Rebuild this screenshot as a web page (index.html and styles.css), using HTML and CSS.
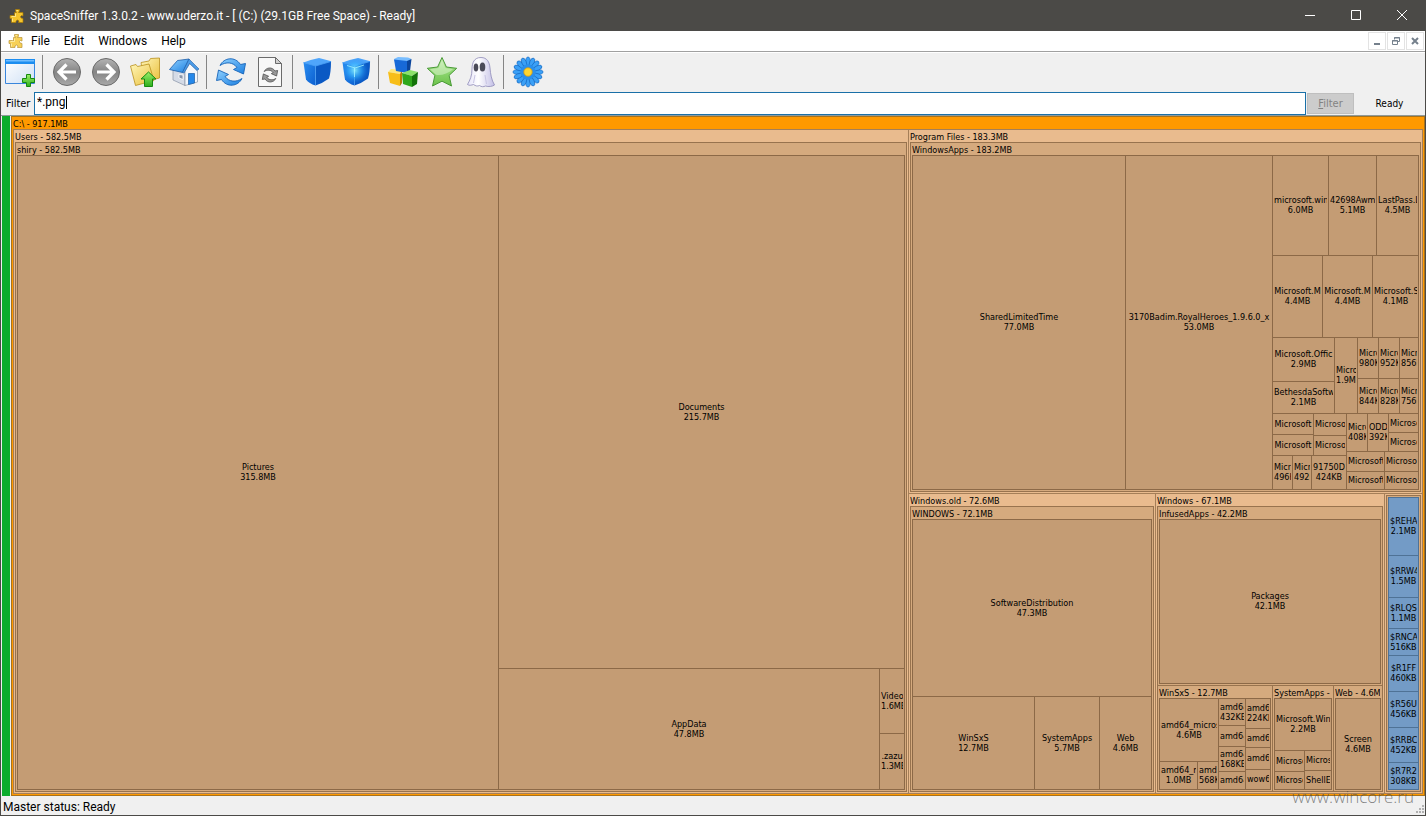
FILE: index.html
```
<!DOCTYPE html>
<html lang="en">
<head>
    <meta charset="UTF-8">
    <meta name="viewport" content="width=device-width, initial-scale=1.0">
    <title>SpaceSniffer 1.3.0.2</title>
    <link rel="stylesheet" href="styles.css">
</head>
<body>
    <svg class="defs" aria-hidden="true">
        <defs>
            <linearGradient id="ball" x1="0" y1="0" x2="0" y2="1">
                <stop offset="0" stop-color="#b4b4b4"/>
                <stop offset="0.5" stop-color="#858585"/>
                <stop offset="1" stop-color="#a9a9a9"/>
            </linearGradient>
            <linearGradient id="blue" x1="0" y1="0" x2="1" y2="1">
                <stop offset="0" stop-color="#8fd0ff"/>
                <stop offset="1" stop-color="#1b7fe0"/>
            </linearGradient>
            <linearGradient id="folder" x1="0" y1="0" x2="1" y2="1">
                <stop offset="0" stop-color="#fff6b8"/>
                <stop offset="1" stop-color="#e9bf3c"/>
            </linearGradient>
            <linearGradient id="green" x1="0" y1="0" x2="0" y2="1">
                <stop offset="0" stop-color="#9af06a"/>
                <stop offset="1" stop-color="#2fae1c"/>
            </linearGradient>
            <linearGradient id="star" x1="0" y1="0" x2="0" y2="1">
                <stop offset="0" stop-color="#c4ecae"/>
                <stop offset="0.5" stop-color="#8dd670"/>
                <stop offset="1" stop-color="#6cc24a"/>
            </linearGradient>
            <linearGradient id="ghost" x1="0" y1="0" x2="1" y2="0">
                <stop offset="0" stop-color="#e6e4f8"/>
                <stop offset="0.4" stop-color="#ffffff"/>
                <stop offset="1" stop-color="#c3bfe6"/>
            </linearGradient>
            <linearGradient id="pane" x1="0" y1="0" x2="1" y2="1">
                <stop offset="0" stop-color="#ffffff"/>
                <stop offset="1" stop-color="#cfe0f5"/>
            </linearGradient>
            <radialGradient id="glow" cx="0.45" cy="0.45" r="0.5">
                <stop offset="0" stop-color="#8df3ff" stop-opacity="0.9"/>
                <stop offset="0.5" stop-color="#37b4ff" stop-opacity="0.6"/>
                <stop offset="1" stop-color="#1a7ae6" stop-opacity="0"/>
            </radialGradient>
            <linearGradient id="cube-left" x1="0" y1="0" x2="1" y2="1">
                <stop offset="0" stop-color="#2a8df0"/>
                <stop offset="1" stop-color="#0b5fd0"/>
            </linearGradient>
            <symbol id="puzzle" viewBox="0 0 16 16">
                <path d="M6.500 1.500h4v1.500l-1 1.500h4.500v3.500l-1.500-.5-1 1 .5 1.500 2 .5v4H9.500l.5-1.500-1.500-1-1.500 1v1.500H2.500v-4L1 10.500v-3h3l1.500.500V4.500h2L6.500 3z" fill="#f6c52c" stroke="#a87a06" stroke-width="0.700"/>
                <path d="M7.500 2.500h1.500M6.500 5.500v3h-4M3.500 10.500v3" fill="none" stroke="#fff0a0" stroke-width="0.800"/>
            </symbol>
            <symbol id="cube" viewBox="0 0 32 32">
                <path d="M2.500 6.500Q9 3.500 18 2l11.500 3Q30.500 5 30 7l-15.500 4z" fill="#4fa5fb"/>
                <path d="M2.500 6.500 14.500 10v19.500Q8 27.500 5 23.500z" fill="url(#cube-left)"/>
                <path d="M14.500 10 30 5.500Q30 16 28 22.500 22 27 14.500 29.500z" fill="#0a59c4"/>
                <path d="M2.500 6.500 14.500 10 30 5.500M14.500 10v19" fill="none" stroke="#4aa0f5" stroke-width="0.800"/>
            </symbol>
            <g id="petals">
                <ellipse cx="16" cy="5.500" rx="2.300" ry="4.500"/>
                <ellipse cx="16" cy="26.500" rx="2.300" ry="4.500"/>
                <ellipse cx="5.500" cy="16" rx="4.500" ry="2.300"/>
                <ellipse cx="26.500" cy="16" rx="4.500" ry="2.300"/>
            </g>
        </defs>
    </svg>

    <div class="window">
        <header class="titlebar">
            <svg class="app-icon"><use href="#puzzle"/></svg>
            <h1 class="window-title">SpaceSniffer 1.3.0.2 - www.uderzo.it - [ (C:) (29.1GB Free Space) - Ready]</h1>
            <button class="caption-button" aria-label="Minimize"><svg viewBox="0 0 10 10"><path d="M0 5.500h10"/></svg></button>
            <button class="caption-button" aria-label="Maximize"><svg viewBox="0 0 10 10"><path d="M.5.5h9v9h-9z"/></svg></button>
            <button class="caption-button" aria-label="Close"><svg viewBox="0 0 10 10"><path d="M0 0l10 10M10 0 0 10"/></svg></button>
        </header>

        <nav class="menubar">
            <svg class="menu-icon"><use href="#puzzle"/></svg>
            <button class="menu">File</button>
            <button class="menu">Edit</button>
            <button class="menu">Windows</button>
            <button class="menu">Help</button>
            <div class="mdi-buttons">
                <button class="mdi-button" aria-label="Minimize view"><svg viewBox="0 0 10 10"><path d="M2 8h6" stroke-width="2"/></svg></button>
                <button class="mdi-button" aria-label="Restore view"><svg viewBox="0 0 10 10"><path d="M3.500 3.500V1.500h5v4h-2M1.500 4.500h5v4h-5zM1 5h6M3 2h6"/></svg></button>
                <button class="mdi-button" aria-label="Close view"><svg viewBox="0 0 10 10"><path d="M2 2l6 6M8 2 2 8" stroke-width="2"/></svg></button>
            </div>
        </nav>

        <div class="toolbar">
            <button class="tool" aria-label="New view">
                <svg viewBox="0 0 32 32">
                    <path d="M1.500 3.500h29v24h-29z" fill="url(#pane)" stroke="#3a86dc"/>
                    <path d="M1 3h30v5H1z" fill="#1c8df0"/>
                    <path d="M2 4h28v1.500H2z" fill="#6fbcff"/>
                    <path d="M22.500 18.500h4v4h4v4h-4v4h-4v-4h-4v-4h4z" fill="url(#green)" stroke="#168a10"/>
                </svg>
            </button>
            <span class="separator"></span>
            <button class="tool" aria-label="Back">
                <svg viewBox="0 0 32 32">
                    <circle cx="16" cy="16" r="13.500" fill="url(#ball)" stroke="#6a6a6a"/>
                    <path d="M25 16H9M15.500 8.500 8 16l7.500 7.500" fill="none" stroke="#fff" stroke-width="3.200"/>
                </svg>
            </button>
            <button class="tool" aria-label="Forward">
                <svg viewBox="0 0 32 32">
                    <circle cx="16" cy="16" r="13.500" fill="url(#ball)" stroke="#6a6a6a"/>
                    <path d="M7 16h16M16.500 8.500 24 16l-7.500 7.500" fill="none" stroke="#fff" stroke-width="3.200"/>
                </svg>
            </button>
            <button class="tool" aria-label="Parent folder">
                <svg viewBox="0 0 32 32">
                    <path d="M12 6.500 20 5l1.500-2.500L30.500 2v20L15 26z" fill="url(#folder)" stroke="#b98f1c" stroke-width="0.800"/>
                    <path d="M1.500 10 7 8.500l1.500 2L20 8l5 16.500L6.500 29.500z" fill="url(#folder)" stroke="#b98f1c" stroke-width="0.800"/>
                    <path d="M19.500 16 27 23h-3.500v7.500h-8V23H12z" fill="url(#green)" stroke="#168a10"/>
                </svg>
            </button>
            <button class="tool" aria-label="Home">
                <svg viewBox="0 0 32 32">
                    <path d="M5 14v10l12 5.500V15z" fill="#d5dbe6" stroke="#8792a5" stroke-width="0.700"/>
                    <path d="M17 29.500V15l5-8 7.500 8v11z" fill="#f4f7fb" stroke="#8792a5" stroke-width="0.700"/>
                    <path d="M1.500 13.500 9.500 4.500 21 3l-6.500 13.500z" fill="url(#blue)" stroke="#1c5da8" stroke-width="0.800"/>
                    <path d="M21 3 31 13l-2 1.500-7.500-7L16 17l-1.500-.5z" fill="#4b9be6" stroke="#1c5da8" stroke-width="0.600"/>
                    <path d="M20.500 17.500h6v9.500l-6 1.500z" fill="#2588ea" stroke="#195ba5" stroke-width="0.700"/>
                    <path d="M11 18.500l4 .5v4.500l-4-1.500z" fill="#8a97ad" stroke="#fff" stroke-width="0.800"/>
                </svg>
            </button>
            <span class="separator"></span>
            <button class="tool" aria-label="Refresh">
                <svg viewBox="0 0 32 32">
                    <g id="arrows" fill="url(#blue)" stroke="#1663b8" stroke-width="0.900">
                        <path d="M5 9.500C9 1.500 20 0 25.500 8.500L30.500 7.500 28.500 18 18.500 13.500l3.500-2C18 6 11 5.500 5 9.500z"/>
                        <path d="M27 22.500C23 30.500 12 32 6.500 23.500L1.500 24.500 3.500 14l10 4.500-3.500 2C14 26 21 26.500 27 22.500z"/>
                    </g>
                </svg>
            </button>
            <button class="tool" aria-label="Refresh view">
                <svg viewBox="0 0 32 32">
                    <path d="M4.500 1.500h17l6 6v23h-23z" fill="#f8f8f8" stroke="#6b6b6b"/>
                    <path d="M21.500 1.500v6h6z" fill="#d0d0d0" stroke="#6b6b6b"/>
                    <g fill="#999" stroke="#505050" stroke-width="1.500" transform="translate(7.500 10.500) scale(0.530)">
                        <path d="M5 9.500C9 1.500 20 0 25.500 8.500L30.500 7.500 28.500 18 18.500 13.500l3.500-2C18 6 11 5.500 5 9.500z"/>
                        <path d="M27 22.500C23 30.500 12 32 6.500 23.500L1.500 24.500 3.500 14l10 4.500-3.500 2C14 26 21 26.500 27 22.500z"/>
                    </g>
                </svg>
            </button>
            <span class="separator"></span>
            <button class="tool" aria-label="Less detail">
                <svg viewBox="0 0 32 32"><use href="#cube"/></svg>
            </button>
            <button class="tool" aria-label="More detail">
                <svg viewBox="0 0 32 32">
                    <use href="#cube"/>
                    <path d="M2.500 6.500 19 2l11 3.500-2 17-13.500 7L5 23.500z" fill="url(#glow)"/>
                    <path d="M7 9.500l8 2.500 9-3M14.500 12v9" fill="none" stroke="#a5f2ff" stroke-width="1" opacity="0.800"/>
                </svg>
            </button>
            <span class="separator"></span>
            <button class="tool" aria-label="File classes">
                <svg viewBox="0 0 32 32">
                    <path d="M1 16l3-3 11 1-2 4z" fill="#ffe77a"/>
                    <path d="M1 16l12 2v12L3 27z" fill="#f7be18"/>
                    <path d="M13 18l2-4v13l-2 3z" fill="#b97f05"/>
                    <path d="M7 3l4-2 10 .5 3.500 1.500-4 3L8 5z" fill="#78bdff"/>
                    <path d="M7 3.500 20 5v12L9 15z" fill="#1769d8"/>
                    <path d="M20 5l4.500-2-1.500 12-3 2z" fill="#0b459c"/>
                    <path d="M15 17l8-3 8 2-6 4z" fill="#8be26a"/>
                    <path d="M15 17l10 3v11l-9-3z" fill="#2fa81c"/>
                    <path d="M25 20l6-4-1 12-5 3z" fill="#137309"/>
                </svg>
            </button>
            <button class="tool" aria-label="Favourites">
                <svg viewBox="0 0 32 32">
                    <path d="M16 1.500l4.400 9.500 10.300 1.300-7.600 7.100 2.400 10.600L16 25.200 6.500 30l2.400-10.600L1.300 12.300 11.600 11z" fill="url(#star)" stroke="#4a9a38" stroke-linejoin="round"/>
                    <path d="M16 4l-3.500 8-8.500 1.200 6 5.500c5 1 12-1 17-5.500L19.500 12z" fill="#dff5d3" opacity="0.500"/>
                </svg>
            </button>
            <button class="tool" aria-label="Ghosts">
                <svg viewBox="0 0 32 32">
                    <path d="M16 1.500C9 1.500 7 7 7 13 7 20 5 24 2.500 28.500c2 1.500 4 .5 6 0 2 1.500 4 2 6 1 2 1.500 4 1.500 6 .5 3 1 7 .5 9-1C26.500 24 25.500 18 25 12 24.500 6 22 1.500 16 1.500z" fill="url(#ghost)" stroke="#8e8ab8" stroke-width="0.800"/>
                    <ellipse cx="11" cy="11.500" rx="2.300" ry="4" fill="#4a4a58"/>
                    <ellipse cx="17.500" cy="11" rx="2.800" ry="4.500" fill="#4a4a58"/>
                    <path d="M10 19l-1.500 8M20 19l1.500 9" stroke="#c8c5e4" fill="none"/>
                </svg>
            </button>
            <span class="separator"></span>
            <button class="tool" aria-label="Configure">
                <svg viewBox="0 0 32 32">
                    <circle cx="16" cy="16" r="11" fill="#2a93f0"/>
                    <g fill="#3ba0f6" stroke="#1263bd" stroke-width="0.600">
                        <use href="#petals"/>
                        <use href="#petals" transform="rotate(22.500 16 16)"/>
                        <use href="#petals" transform="rotate(45 16 16)"/>
                        <use href="#petals" transform="rotate(67.500 16 16)"/>
                    </g>
                    <circle cx="16" cy="16" r="7.500" fill="#2a8fec"/>
                    <circle cx="16" cy="16" r="4.200" fill="#ffd52e" stroke="#d69a10" stroke-width="0.800"/>
                </svg>
            </button>
        </div>

        <form class="filterbar">
            <label class="filter-label" for="filter">Filter</label>
            <div class="filter-box">
                <input class="filter-input" id="filter" type="text" value="*.png" autocomplete="off">
                <span class="caret"></span>
            </div>
            <button class="filter-button" type="button" disabled><u>F</u>ilter</button>
            <output class="filter-status">Ready</output>
        </form>

        <main class="workspace">
            <div class="free-bar"></div>
            <section class="drive">
                <h2 class="name">C:\ - 917.1MB</h2>
                <div class="split" style="grid-template-columns: 895fr 514fr">

                    <section class="folder">
                        <h3 class="name">Users - 582.5MB</h3>
                        <div class="split">
                            <section class="folder deep">
                                <h4 class="name">shiry - 582.5MB</h4>
                                <div class="split" style="grid-template-columns: 481fr 406fr">
                                    <div class="tile"><p>Pictures</p><p>315.8MB</p></div>
                                    <div class="split" style="grid-template-rows: 513fr 121fr">
                                        <div class="tile"><p>Documents</p><p>215.7MB</p></div>
                                        <div class="split" style="grid-template-columns: 381fr 25fr">
                                            <div class="tile"><p>AppData</p><p>47.8MB</p></div>
                                            <div class="split" style="grid-template-rows: 65fr 56fr">
                                                <div class="tile"><p>Videos</p><p>1.6MB</p></div>
                                                <div class="tile"><p>.zazu</p><p>1.3MB</p></div>
                                            </div>
                                        </div>
                                    </div>
                                </div>
                            </section>
                        </div>
                    </section>

                    <div class="split" style="grid-template-rows: 364fr 300fr">
                        <section class="folder">
                            <h3 class="name">Program Files - 183.3MB</h3>
                            <div class="split">
                                <section class="folder deep">
                                    <h4 class="name">WindowsApps - 183.2MB</h4>
                                    <div class="split" style="grid-template-columns: 213fr 147fr 146fr">
                                        <div class="tile"><p>SharedLimitedTime</p><p>77.0MB</p></div>
                                        <div class="tile"><p>3170Badim.RoyalHeroes_1.9.6.0_x</p><p>53.0MB</p></div>
                                        <div class="split" style="grid-template-rows: 100fr 82fr 76fr 76fr">
                                            <div class="split" style="grid-template-columns: 56fr 48fr 42fr">
                                                <div class="tile"><p>microsoft.win</p><p>6.0MB</p></div>
                                                <div class="tile"><p>42698Awm</p><p>5.1MB</p></div>
                                                <div class="tile"><p>LastPass.L</p><p>4.5MB</p></div>
                                            </div>
                                            <div class="split" style="grid-template-columns: 50fr 50fr 46fr">
                                                <div class="tile"><p>Microsoft.M</p><p>4.4MB</p></div>
                                                <div class="tile"><p>Microsoft.M</p><p>4.4MB</p></div>
                                                <div class="tile"><p>Microsoft.S</p><p>4.1MB</p></div>
                                            </div>
                                            <div class="split" style="grid-template-columns: 62fr 23fr 61fr">
                                                <div class="split" style="grid-template-rows: 44fr 32fr">
                                                    <div class="tile"><p>Microsoft.Offic</p><p>2.9MB</p></div>
                                                    <div class="tile"><p>BethesdaSoftw</p><p>2.1MB</p></div>
                                                </div>
                                                <div class="tile"><p>Micro</p><p>1.9MB</p></div>
                                                <div class="split" style="grid-template: 41fr 35fr / 21fr 21fr 19fr">
                                                    <div class="tile"><p>Micro</p><p>980KB</p></div>
                                                    <div class="tile"><p>Micro</p><p>952KB</p></div>
                                                    <div class="tile"><p>Micro</p><p>856KB</p></div>
                                                    <div class="tile"><p>Micro</p><p>844KB</p></div>
                                                    <div class="tile"><p>Micro</p><p>828KB</p></div>
                                                    <div class="tile"><p>Micro</p><p>756KB</p></div>
                                                </div>
                                            </div>
                                            <div class="split" style="grid-template-columns: 74fr 72fr">
                                                <div class="split" style="grid-template-rows: 42fr 34fr">
                                                    <div class="split" style="grid-template-columns: 41fr 33fr">
                                                        <div class="split" style="grid-template-rows: 21fr 21fr">
                                                            <div class="tile"><p>Microsoft</p></div>
                                                            <div class="tile"><p>Microsoft</p></div>
                                                        </div>
                                                        <div class="split" style="grid-template-rows: 22fr 20fr">
                                                            <div class="tile"><p>Microso</p></div>
                                                            <div class="tile"><p>Microso</p></div>
                                                        </div>
                                                    </div>
                                                    <div class="split" style="grid-template-columns: 20fr 19fr 35fr">
                                                        <div class="tile"><p>Micr</p><p>496KB</p></div>
                                                        <div class="tile"><p>Micr</p><p>492KB</p></div>
                                                        <div class="tile"><p>91750D</p><p>424KB</p></div>
                                                    </div>
                                                </div>
                                                <div class="split" style="grid-template-rows: 38fr 38fr">
                                                    <div class="split" style="grid-template-columns: 21fr 21fr 30fr">
                                                        <div class="tile"><p>Micro</p><p>408KB</p></div>
                                                        <div class="tile"><p>ODD</p><p>392KB</p></div>
                                                        <div class="split" style="grid-template-rows: 19fr 19fr">
                                                            <div class="tile"><p>Microso</p></div>
                                                            <div class="tile"><p>Microso</p></div>
                                                        </div>
                                                    </div>
                                                    <div class="split" style="grid-template: 20fr 18fr / 38fr 34fr">
                                                        <div class="tile"><p>Microsoft</p></div>
                                                        <div class="tile"><p>Microso</p></div>
                                                        <div class="tile"><p>Microsoft</p></div>
                                                        <div class="tile"><p>Microso</p></div>
                                                    </div>
                                                </div>
                                            </div>
                                        </div>
                                    </div>
                                </section>
                            </div>
                        </section>

                        <div class="split" style="grid-template-columns: 247fr 229fr 38fr">
                            <section class="folder">
                                <h3 class="name">Windows.old - 72.6MB</h3>
                                <div class="split">
                                    <section class="folder deep">
                                        <h4 class="name">WINDOWS - 72.1MB</h4>
                                        <div class="split" style="grid-template-rows: 177fr 93fr">
                                            <div class="tile"><p>SoftwareDistribution</p><p>47.3MB</p></div>
                                            <div class="split" style="grid-template-columns: 122fr 65fr 52fr">
                                                <div class="tile"><p>WinSxS</p><p>12.7MB</p></div>
                                                <div class="tile"><p>SystemApps</p><p>5.7MB</p></div>
                                                <div class="tile"><p>Web</p><p>4.6MB</p></div>
                                            </div>
                                        </div>
                                    </section>
                                </div>
                            </section>

                            <section class="folder">
                                <h3 class="name">Windows - 67.1MB</h3>
                                <div class="split" style="grid-template-rows: 179fr 106fr">
                                    <section class="folder deep">
                                        <h4 class="name">InfusedApps - 42.2MB</h4>
                                        <div class="split">
                                            <div class="tile"><p>Packages</p><p>42.1MB</p></div>
                                        </div>
                                    </section>
                                    <div class="split" style="grid-template-columns: 115fr 61fr 49fr">
                                        <section class="folder deep">
                                            <h4 class="name">WinSxS - 12.7MB</h4>
                                            <div class="split" style="grid-template-columns: 59fr 27fr 25fr">
                                                <div class="split" style="grid-template-rows: 63fr 28fr">
                                                    <div class="tile"><p>amd64_micros</p><p>4.6MB</p></div>
                                                    <div class="split" style="grid-template-columns: 38fr 21fr">
                                                        <div class="tile"><p>amd64_m</p><p>1.0MB</p></div>
                                                        <div class="tile"><p>amd6</p><p>568KB</p></div>
                                                    </div>
                                                </div>
                                                <div class="split" style="grid-template-rows: 27fr 21fr 25fr 18fr">
                                                    <div class="tile"><p>amd64</p><p>432KB</p></div>
                                                    <div class="tile"><p>amd64</p></div>
                                                    <div class="tile"><p>amd64</p><p>168KB</p></div>
                                                    <div class="tile"><p>amd64</p></div>
                                                </div>
                                                <div class="split" style="grid-template-rows: 30fr 19fr 22fr 20fr">
                                                    <div class="tile"><p>amd64</p><p>224KB</p></div>
                                                    <div class="tile"><p>amd64</p></div>
                                                    <div class="tile"><p>amd64</p></div>
                                                    <div class="tile"><p>wow6</p></div>
                                                </div>
                                            </div>
                                        </section>
                                        <section class="folder deep">
                                            <h4 class="name">SystemApps - 5</h4>
                                            <div class="split" style="grid-template-rows: 52fr 39fr">
                                                <div class="tile"><p>Microsoft.Win</p><p>2.2MB</p></div>
                                                <div class="split" style="grid-template-columns: 30fr 27fr">
                                                    <div class="split" style="grid-template-rows: 21fr 18fr">
                                                        <div class="tile"><p>Microso</p></div>
                                                        <div class="tile"><p>Microso</p></div>
                                                    </div>
                                                    <div class="split" style="grid-template-rows: 20fr 19fr">
                                                        <div class="tile"><p>Micros</p></div>
                                                        <div class="tile"><p>ShellE</p></div>
                                                    </div>
                                                </div>
                                            </div>
                                        </section>
                                        <section class="folder deep">
                                            <h4 class="name">Web - 4.6MB</h4>
                                            <div class="split">
                                                <div class="tile"><p>Screen</p><p>4.6MB</p></div>
                                            </div>
                                        </section>
                                    </div>
                                </div>
                            </section>

                            <section class="folder untitled">
                                <div class="split">
                                    <section class="folder deep untitled">
                                        <div class="split" style="grid-template-rows: 58fr 42fr 31fr 27fr 36fr 36fr 35fr 27fr">
                                            <div class="tile file"><p>$REHA</p><p>2.1MB</p></div>
                                            <div class="tile file"><p>$RRW4</p><p>1.5MB</p></div>
                                            <div class="tile file"><p>$RLQS</p><p>1.1MB</p></div>
                                            <div class="tile file"><p>$RNCA</p><p>516KB</p></div>
                                            <div class="tile file"><p>$R1FF</p><p>460KB</p></div>
                                            <div class="tile file"><p>$R56U</p><p>456KB</p></div>
                                            <div class="tile file"><p>$RRBC</p><p>452KB</p></div>
                                            <div class="tile file"><p>$R7R2</p><p>308KB</p></div>
                                        </div>
                                    </section>
                                </div>
                            </section>
                        </div>
                    </div>
                </div>
            </section>
        </main>

        <footer class="statusbar">
            <span>Master status: Ready</span>
            <svg class="grip" viewBox="0 0 10 10"><path d="M7 1h2M4 4h2M7 4h2M1 7h2M4 7h2M7 7h2" stroke="#b0b0b0" stroke-width="2"/></svg>
        </footer>
        <span class="watermark">www.wincore.ru</span>
    </div>
</body>
</html>
```
FILE: styles.css
```
* {
    box-sizing: border-box;
}
body {
    margin: 0;
    font-family: Roboto, "Noto Sans", sans-serif;
    font-size: 12px;
    color: #000;
}
h1, h2, h3, h4, p {
    margin: 0;
    font-size: inherit;
    font-weight: normal;
}
button {
    padding: 0;
    border: 0;
    background: none;
    font: inherit;
    color: inherit;
}
.defs {
    position: absolute;
    width: 0;
    height: 0;
}
.window {
    position: relative;
    display: flex;
    flex-direction: column;
    height: 100vh;
    border: 1px solid #4b4a47;
    border-top: 0;
    background: #f0f0f0;
}

/* title bar */
.titlebar {
    display: flex;
    align-items: center;
    height: 31px;
    padding-left: 8px;
    background: #4b4a47;
    color: #fff;
}
.app-icon, .menu-icon {
    width: 16px;
    height: 16px;
}
.window-title {
    flex: 1;
    margin-left: 5px;
}
.caption-button {
    width: 46px;
    height: 31px;
}
.caption-button svg {
    width: 10px;
    height: 10px;
    fill: none;
    stroke: #fff;
}

/* menu */
.menubar {
    display: flex;
    align-items: center;
    height: 21px;
    padding-left: 7px;
    border-bottom: 1px solid #a0a0a0;
    background: #fff;
}
.menu-icon {
    opacity: 0.8;
}
.menu {
    padding: 0 7px;
}
.mdi-buttons {
    display: flex;
    gap: 1px;
    margin-left: auto;
    padding-right: 1px;
}
.mdi-button {
    display: flex;
    align-items: center;
    justify-content: center;
    width: 18px;
    height: 18px;
    border: 1px solid #e3e3e3;
}
.mdi-button svg {
    width: 10px;
    height: 10px;
    fill: none;
    stroke: #75808c;
}

/* toolbar */
.toolbar {
    display: flex;
    align-items: center;
    height: 39px;
    border-top: 1px solid #fff;
}
.tool {
    display: flex;
    justify-content: center;
    width: 39px;
    padding-right: 1px;
}
.tool svg {
    width: 32px;
    height: 32px;
}
.separator {
    width: 1px;
    height: 34px;
    margin: 0 5px 0 2px;
    background: #858585;
}

/* filter */
.filterbar {
    display: flex;
    align-items: center;
    height: 24px;
    padding-left: 5px;
    font-family: "DejaVu Sans Condensed", "DejaVu Sans", sans-serif;
    font-size: 11px;
}
.filter-label {
    width: 28px;
}
.filter-box {
    position: relative;
    flex: 1;
}
.filter-input {
    display: block;
    width: 100%;
    height: 23px;
    padding: 0 2px 3px;
    border: 1px solid #1a70a8;
    outline: 0;
    background: #fff;
    font-family: Roboto, "Noto Sans", sans-serif;
    font-size: 12px;
}
.caret {
    position: absolute;
    top: 4px;
    left: 32px;
    width: 1px;
    height: 13px;
    background: #000;
}
.filter-button {
    width: 47px;
    height: 21px;
    margin-left: 1px;
    border: 1px solid #bfbfbf;
    background: #ccc;
    color: #838383;
}
.filter-status {
    width: 71px;
    font-size: 10px;
    text-align: center;
}

/* treemap */
.workspace {
    display: flex;
    flex: 1;
    gap: 1px;
    min-height: 0;
    padding-left: 1px;
    border-top: 1px solid #8f9a9a;
    font-family: "DejaVu Sans Condensed", "DejaVu Sans", sans-serif;
    font-size: 9px;
    line-height: 10px;
}
.free-bar {
    width: 8px;
    background: #0cac2c;
}
.drive, .folder {
    display: flex;
    flex-direction: column;
    padding: 0 2px 2px 1px;
    border: 1px solid;
}
.drive {
    flex: 1;
    min-width: 0;
    border-color: #a8721c;
    background: #ff9900;
}
/* neighbours share one border line */
.folder, .tile {
    min-width: 0;
    min-height: 0;
    margin: 0 -1px -1px 0;
}
.folder {
    border-color: #a57f58;
    background: #e9bb8e;
}
.folder.deep {
    border-color: #98734e;
    background: #d5aa7e;
}
.folder.untitled {
    padding-top: 1px;
}
.name {
    height: 12px;
    line-height: 14px;
    overflow: hidden;
    white-space: nowrap;
}
.split {
    display: grid;
    grid-template: minmax(0, 1fr) / minmax(0, 1fr);
    flex: 1;
    min-width: 0;
    min-height: 0;
}
.tile {
    display: flex;
    flex-direction: column;
    justify-content: center;
    padding: 0 1px 1px;
    border: 1px solid #8c6947;
    background: #c49c74;
    text-align: center;
}
.tile p {
    overflow: hidden;
    white-space: nowrap;
}
.tile.file {
    border-color: #4f7296;
    background: #739bc6;
}

/* status */
.statusbar {
    display: flex;
    align-items: center;
    justify-content: space-between;
    height: 19px;
    padding: 2px 0 0 2px;
}
.grip {
    align-self: flex-end;
    width: 10px;
    height: 10px;
}
.watermark {
    position: absolute;
    right: 11px;
    bottom: 7px;
    font-family: "Open Sans", "Noto Sans", sans-serif;
    font-size: 17px;
    font-weight: 300;
    line-height: 22px;
    color: rgba(70, 70, 70, 0.65);
}
```
